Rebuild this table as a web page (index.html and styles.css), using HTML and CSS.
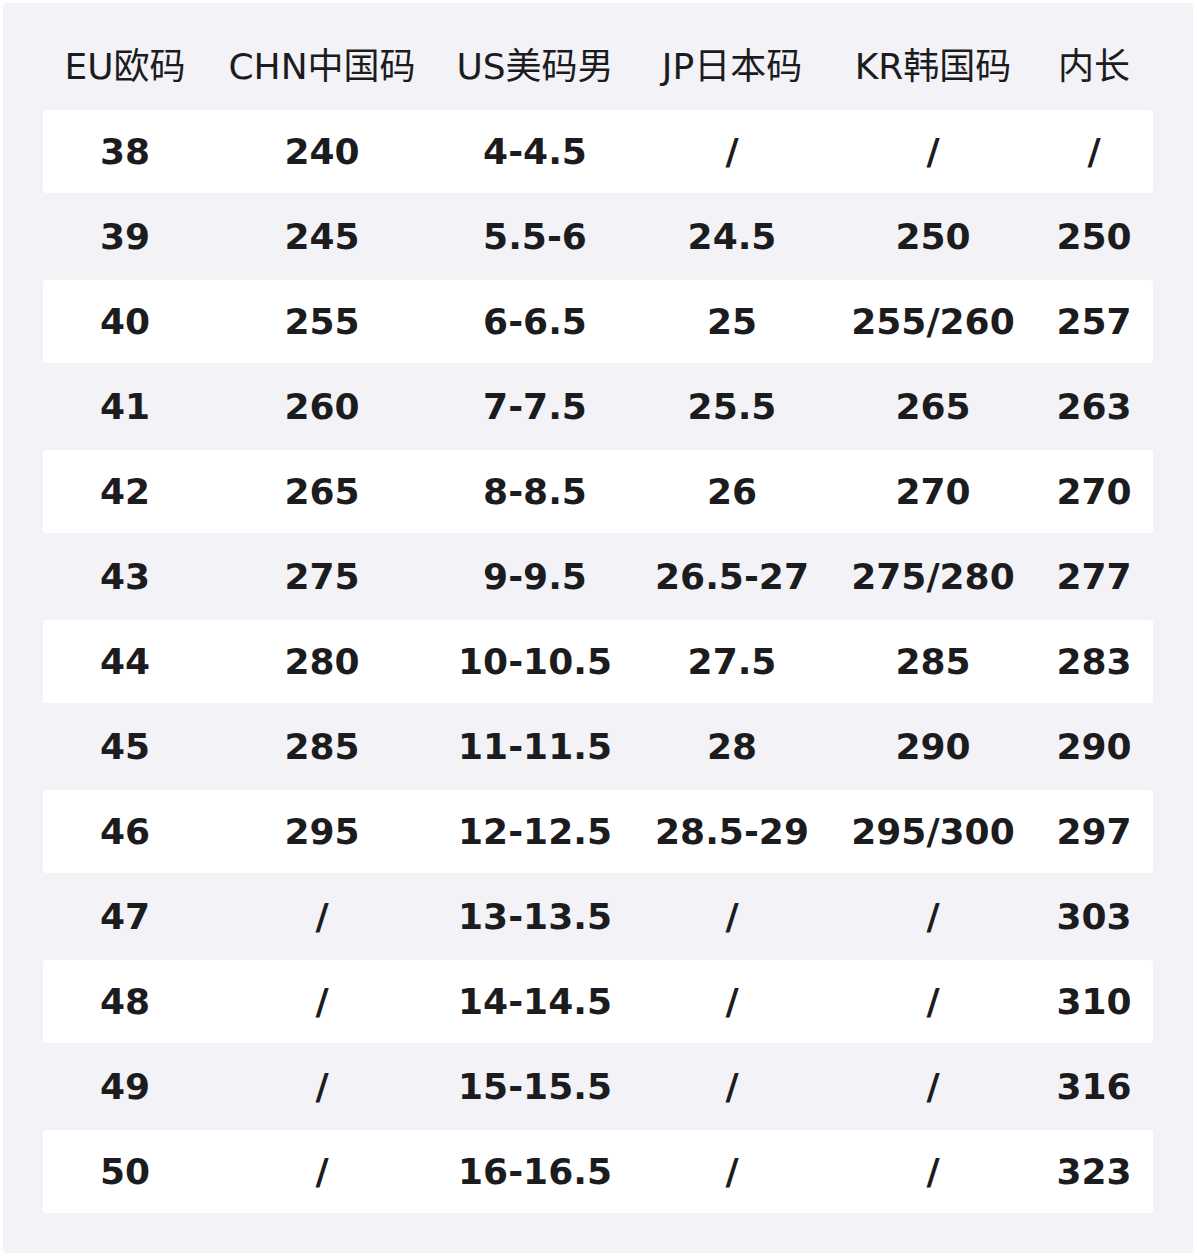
FILE: index.html
```html
<!DOCTYPE html>
<html lang="zh-CN">
<head>
<meta charset="utf-8">
<title>尺码表</title>
<link rel="stylesheet" href="styles.css">
</head>
<body>
<div class="panel">
  <div class="row head">
    <div>EU欧码</div><div>CHN中国码</div><div>US美码男</div><div>JP日本码</div><div>KR韩国码</div><div>内长</div>
  </div>
  <div class="row odd"><div>38</div><div>240</div><div>4-4.5</div><div>/</div><div>/</div><div>/</div></div>
  <div class="row"><div>39</div><div>245</div><div>5.5-6</div><div>24.5</div><div>250</div><div>250</div></div>
  <div class="row odd"><div>40</div><div>255</div><div>6-6.5</div><div>25</div><div>255/260</div><div>257</div></div>
  <div class="row"><div>41</div><div>260</div><div>7-7.5</div><div>25.5</div><div>265</div><div>263</div></div>
  <div class="row odd"><div>42</div><div>265</div><div>8-8.5</div><div>26</div><div>270</div><div>270</div></div>
  <div class="row"><div>43</div><div>275</div><div>9-9.5</div><div>26.5-27</div><div>275/280</div><div>277</div></div>
  <div class="row odd"><div>44</div><div>280</div><div>10-10.5</div><div>27.5</div><div>285</div><div>283</div></div>
  <div class="row"><div>45</div><div>285</div><div>11-11.5</div><div>28</div><div>290</div><div>290</div></div>
  <div class="row odd"><div>46</div><div>295</div><div>12-12.5</div><div>28.5-29</div><div>295/300</div><div>297</div></div>
  <div class="row"><div>47</div><div>/</div><div>13-13.5</div><div>/</div><div>/</div><div>303</div></div>
  <div class="row odd"><div>48</div><div>/</div><div>14-14.5</div><div>/</div><div>/</div><div>310</div></div>
  <div class="row"><div>49</div><div>/</div><div>15-15.5</div><div>/</div><div>/</div><div>316</div></div>
  <div class="row odd"><div>50</div><div>/</div><div>16-16.5</div><div>/</div><div>/</div><div>323</div></div>
</div>
</body>
</html>
```
FILE: styles.css
```css
html, body {
  margin: 0;
  padding: 0;
  background: #ffffff;
}
body {
  padding: 3px;
  font-family: "DejaVu Sans", "Noto Sans CJK SC", sans-serif;
  color: #1c1c1e;
}
.panel {
  width: 1190px;
  height: 1250px;
  box-sizing: border-box;
  background: #f2f2f7;
  border-radius: 4px;
  padding: 22px 40px 40px 40px;
  display: flex;
  flex-direction: column;
  gap: 2px;
}
.row {
  display: grid;
  grid-template-columns: 164px 230px 196px 198px 204px 118px;
  height: 83px;
  align-items: center;
  font-size: 36px;
  font-weight: bold;
  white-space: nowrap;
  border-radius: 3px;
}
.row > div {
  text-align: center;
  line-height: 1;
}
.row.head {
  font-weight: normal;
}
.row.odd {
  background: #ffffff;
}
```
